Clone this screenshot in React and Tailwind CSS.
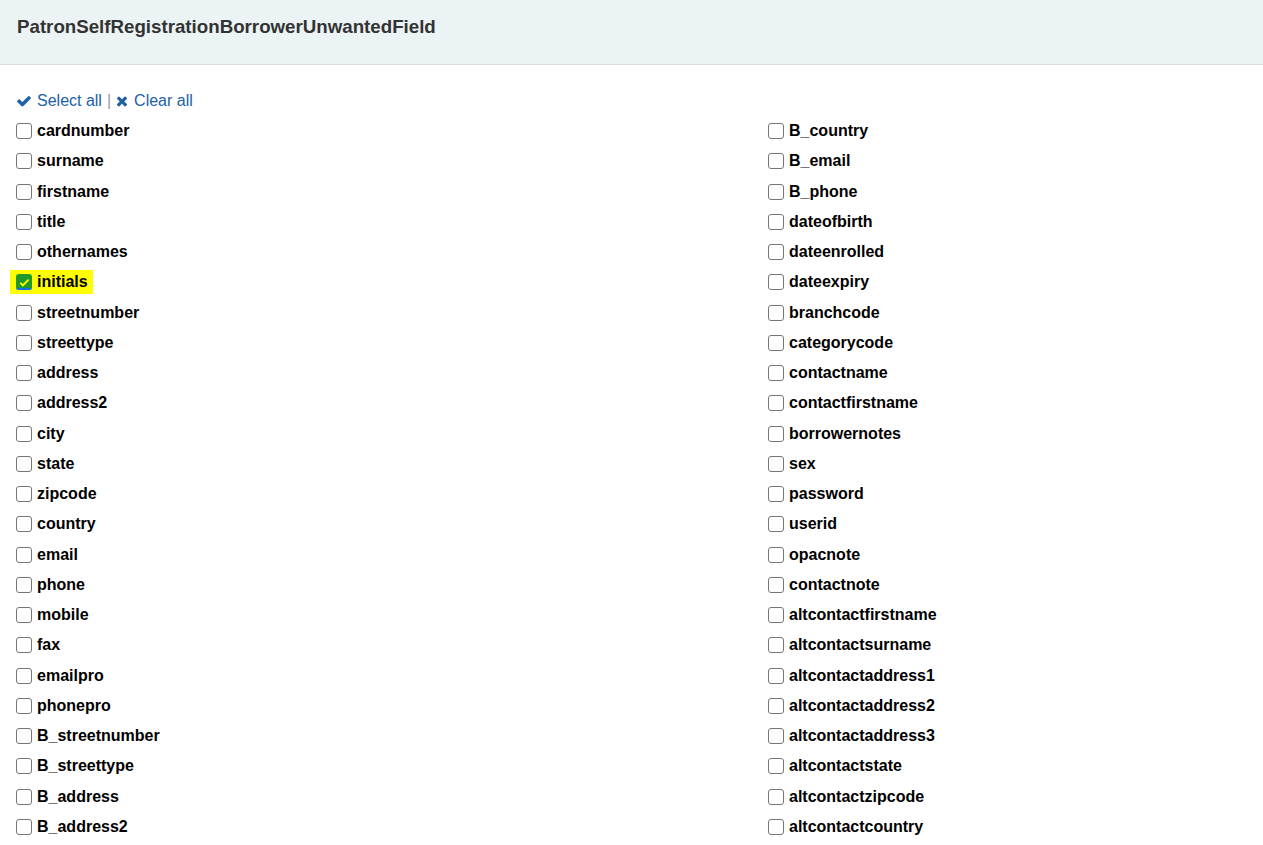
import React, { useState } from 'react';

const LEFT = [
  'cardnumber', 'surname', 'firstname', 'title', 'othernames', 'initials',
  'streetnumber', 'streettype', 'address', 'address2', 'city', 'state',
  'zipcode', 'country', 'email', 'phone', 'mobile', 'fax', 'emailpro',
  'phonepro', 'B_streetnumber', 'B_streettype', 'B_address', 'B_address2',
];

const RIGHT = [
  'B_country', 'B_email', 'B_phone', 'dateofbirth', 'dateenrolled', 'dateexpiry',
  'branchcode', 'categorycode', 'contactname', 'contactfirstname', 'borrowernotes',
  'sex', 'password', 'userid', 'opacnote', 'contactnote', 'altcontactfirstname',
  'altcontactsurname', 'altcontactaddress1', 'altcontactaddress2', 'altcontactaddress3',
  'altcontactstate', 'altcontactzipcode', 'altcontactcountry',
];

const CheckIcon = () => (
  <svg viewBox="0 0 1792 1792" className="w-[16px] h-[16px]" fill="currentColor">
    <path d="M1671 566q0 40-28 68l-724 724-136 136q-28 28-68 28t-68-28l-136-136-362-362q-28-28-28-68t28-68l136-136q28-28 68-28t68 28l294 295 656-657q28-28 68-28t68 28l136 136q28 28 28 68z" />
  </svg>
);

const TimesIcon = () => (
  <svg viewBox="0 0 1408 1792" className="w-[12px] h-[16px]" fill="currentColor">
    <path d="M1298 1322q0 40-28 68l-136 136q-28 28-68 28t-68-28l-294-294-294 294q-28 28-68 28t-68-28l-136-136q-28-28-28-68t28-68l294-294-294-294q-28-28-28-68t28-68l136-136q28-28 68-28t68 28l294 294 294-294q28-28 68-28t68 28l136 136q28 28 28 68t-28 68l-294 294 294 294q28 28 28 68z" />
  </svg>
);

const Box = ({ checked }) =>
  checked ? (
    <span className="relative w-[16px] h-[16px] rounded-[3px] bg-[#1f9a2a] overflow-hidden flex items-center justify-center shrink-0">
      <svg viewBox="0 0 16 16" className="w-[13px] h-[13px]">
        <path d="M3 8.5l3 3 7-7" fill="none" stroke="#ffff00" strokeWidth="2.4" />
      </svg>
      <span className="absolute left-0 right-0 bottom-0 h-[2px] bg-[#1672e8]" />
    </span>
  ) : (
    <span className="w-[16px] h-[16px] rounded-[3px] border border-[#767676] bg-white shrink-0" />
  );

const Field = ({ name, checked, onToggle }) => (
  <div className="h-[30.25px] flex items-center">
    <label
      onClick={onToggle}
      className={
        'flex items-center gap-[5px] cursor-pointer ' +
        (checked ? 'bg-[#ffff00] -ml-[6px] pl-[6px] pr-[5px] h-[24px]' : '')
      }
    >
      <Box checked={checked} />
      <span className="text-[16px] font-bold text-black leading-none">{name}</span>
    </label>
  </div>
);

export default function App() {
  const [selected, setSelected] = useState({ initials: true });

  const toggle = (name) => setSelected((s) => ({ ...s, [name]: !s[name] }));
  const all = [...LEFT, ...RIGHT];

  return (
    <div className="min-h-screen bg-white font-['Liberation_Sans',Arial,sans-serif] text-[#333]">
      <div className="h-[65px] bg-[#ebf3f5] border-b border-[#dcdfe0] pl-[17px] pt-[16px]">
        <h1 className="text-[18.72px] font-bold leading-[22px] text-[#333]">
          PatronSelfRegistrationBorrowerUnwantedField
        </h1>
      </div>

      <div className="pl-[16px] pt-[21px]">
        <div className="h-[30px] flex items-center text-[16px] text-[#2261a3]">
          <button
            className="flex items-center gap-[5px] hover:underline"
            onClick={() => setSelected(Object.fromEntries(all.map((n) => [n, true])))}
          >
            <CheckIcon />
            Select all
          </button>
          <span className="text-[#999] mx-[5px]">|</span>
          <button
            className="flex items-center gap-[6px] hover:underline"
            onClick={() => setSelected({})}
          >
            <TimesIcon />
            Clear all
          </button>
        </div>

        <div className="grid grid-cols-[752px_1fr]">
          <div className="flex flex-col">
            {LEFT.map((n) => (
              <Field key={n} name={n} checked={!!selected[n]} onToggle={() => toggle(n)} />
            ))}
          </div>
          <div className="flex flex-col">
            {RIGHT.map((n) => (
              <Field key={n} name={n} checked={!!selected[n]} onToggle={() => toggle(n)} />
            ))}
          </div>
        </div>
      </div>
    </div>
  );
}
